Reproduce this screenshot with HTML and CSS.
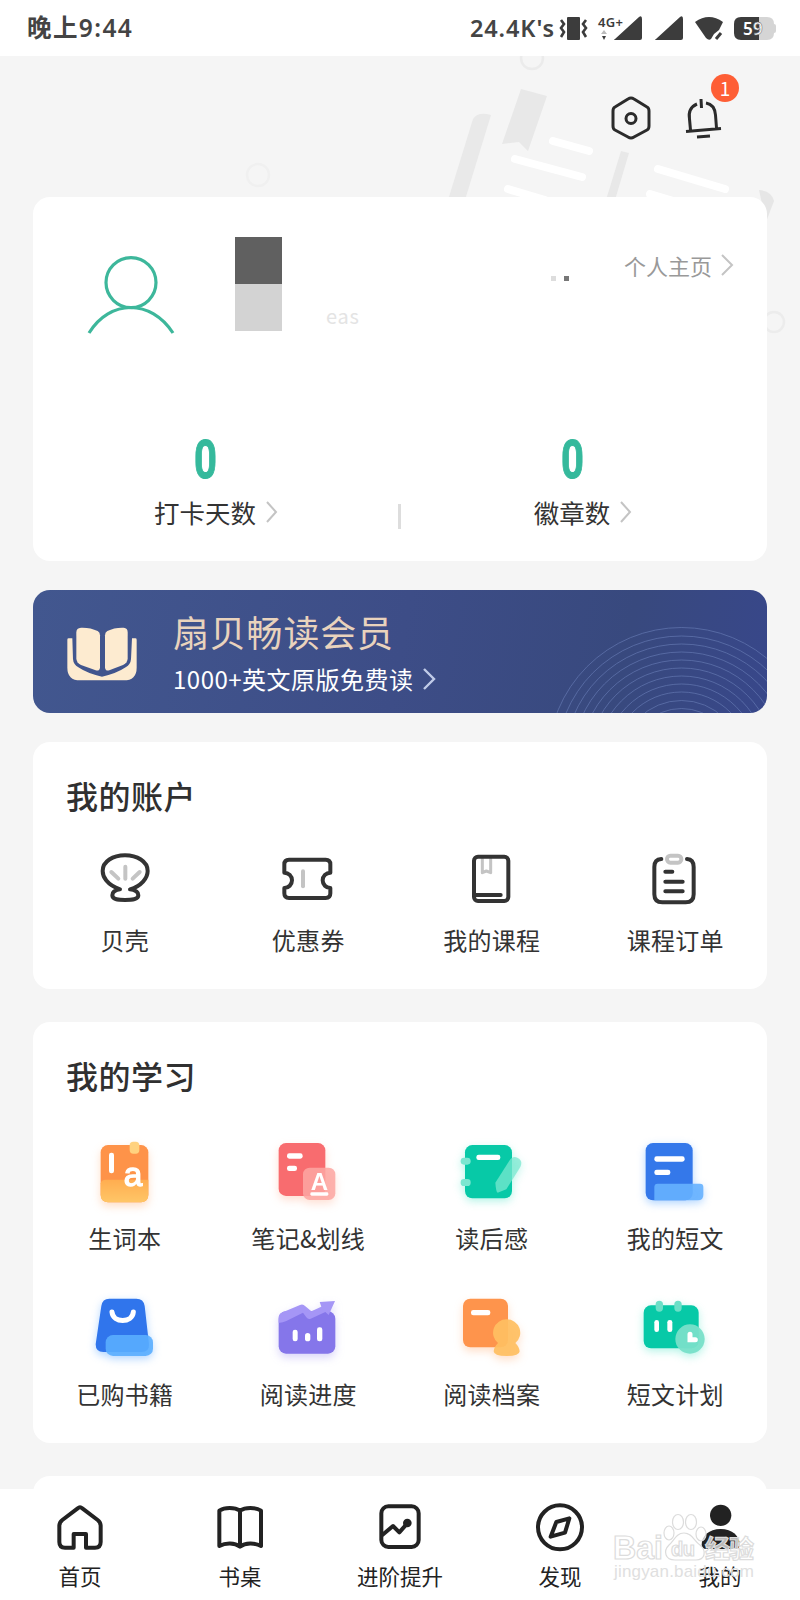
FILE: index.html
```html
<!DOCTYPE html>
<html lang="zh-CN">
<head>
  <meta charset="UTF-8" />
  <meta name="viewport" content="width=device-width, initial-scale=1.0"/>
  <title>我的</title>
  <link rel="stylesheet" href="styles.css">
</head>
<body>
  <div class="page">
    <svg class="bg-art" viewBox="0 0 800 340">
      <circle cx="532" cy="58" r="11" fill="none" stroke="#ebebeb" stroke-width="2.500"/>
      <circle cx="258" cy="175" r="11" fill="none" stroke="#f0f0f0" stroke-width="2.500"/>
      <circle cx="774" cy="322" r="10" fill="none" stroke="#ececec" stroke-width="2.500"/>
      <path d="M521 89 547 96 528 151 519 142 502 144Z" fill="#e8e8e8"/>
      <path d="M473 119Q478 111 491 115L465 200H448Z" fill="#e9e9e9"/>
      <path d="M621 151 629 153 615 200H606Z" fill="#e8e8e8"/>
      <path d="M759 190Q772 191 774 201L766 222Z" fill="#e6e6e6"/>
      <g stroke="#fff" stroke-width="8" stroke-linecap="round">
        <path d="M553 141 589 151M515 159 582 177M658 169 725 189M508 189 545 200M650 194 680 203"/>
      </g>
    </svg>

    <div class="status-bar">
      <span class="time">晚上9:44</span>
      <div class="status-right">
        <span class="speed">24.4K's</span>
        <svg width="230" height="30" viewBox="0 0 230 30">
          <g fill="#3c3c3c">
            <rect x="12" y="4" width="13" height="23" rx="1"/>
            <path d="M6 7 9 11 6 15 9 19 6 24M31 7 28 11 31 15 28 19 31 24" fill="none" stroke="#3c3c3c" stroke-width="2.600"/>
            <path d="M60 26 84 4Q87 2 87 6V25Q87 27 85 27H60Q58 27 60 26ZM101 26 125 4Q128 2 128 6V25Q128 27 126 27H101Q99 27 101 26Z"/>
            <path d="M140 9Q154-1 168 9L164 17 159 21 156 26Q154 28 151 25Z"/>
            <path d="M161 26 166 20" stroke="#3c3c3c" stroke-width="3"/>
            <path d="M47 23H51L49 27Z"/>
            <path d="M46 21H52L49 17Z" fill="#bbb"/>
          </g>
          <text x="43" y="14" class="net" textLength="25">4G+</text>
          <path d="M203 4H212Q219 4 219 11V20Q219 27 212 27H203Z" fill="#d5d5d5"/>
          <rect x="217" y="11" width="4" height="9" rx="2" fill="#d5d5d5"/>
          <path d="M204 4H186Q179 4 179 11V20Q179 27 186 27H204Z" fill="#3c3c3c"/>
          <text x="188" y="22" class="battery">5</text>
          <text x="198" y="22" class="battery battery-edge">9</text>
        </svg>
      </div>
    </div>

    <div class="top-actions">
      <svg width="42" height="46" viewBox="0 0 42 46" fill="none" stroke="#2b2b2b" stroke-width="3">
        <path d="M18 4Q21 2 24 4L37 12Q39 13 39 16V31Q39 34 37 35L24 42Q21 44 18 42L5 35Q3 34 3 31V16Q3 13 5 12Z"/>
        <circle cx="21" cy="23.500" r="5"/>
      </svg>
      <div class="bell">
        <svg width="40" height="46" viewBox="0 0 40 46" fill="none" stroke="#2b2b2b" stroke-width="3">
          <path d="M13 9C6 12 4.500 18 5.500 24L6.500 35M22 8C28 9 31 14 31.500 20L32.500 33M2 36.500 37 33.500M17 4 17.500 13M13 42 26 41"/>
        </svg>
        <span class="badge">1</span>
      </div>
    </div>

    <section class="card profile">
      <div class="profile-row">
        <svg class="avatar" width="88" height="80" viewBox="0 0 88 80" fill="none" stroke="#3db79b" stroke-width="3.200">
          <circle cx="44" cy="26.600" r="25"/>
          <path d="M2 77C23 43 64 43 86 77"/>
        </svg>
        <div class="mosaic"><i></i><i></i></div>
        <span class="nick">eas</span>
        <div class="dots"><i></i><i></i></div>
        <a class="home-link">个人主页
          <svg width="14" height="24" viewBox="0 0 14 24"><path d="M2 2 12 12 2 22"/></svg>
        </a>
      </div>
      <div class="stats">
        <div class="stat">
          <b>0</b>
          <span>打卡天数<svg width="14" height="24" viewBox="0 0 14 24"><path d="M2 2 11 12 2 22"/></svg></span>
        </div>
        <div class="divider"></div>
        <div class="stat">
          <b>0</b>
          <span>徽章数<svg width="14" height="24" viewBox="0 0 14 24"><path d="M2 2 11 12 2 22"/></svg></span>
        </div>
      </div>
    </section>

    <section class="vip">
      <svg class="rings" viewBox="0 0 734 123" fill="none" stroke="#6478b0" stroke-opacity=".7">
        <circle cx="648.500" cy="171" r="133.500"/><circle cx="648.500" cy="171" r="125"/>
        <circle cx="648.500" cy="171" r="117"/><circle cx="648.500" cy="171" r="109"/>
        <circle cx="648.500" cy="171" r="101"/><circle cx="648.500" cy="171" r="93"/>
        <circle cx="648.500" cy="171" r="85"/><circle cx="648.500" cy="171" r="77"/>
        <circle cx="648.500" cy="171" r="69"/><circle cx="648.500" cy="171" r="60.500"/>
        <circle cx="648.500" cy="171" r="52.500"/>
      </svg>
      <svg class="vip-icon" width="70" height="54" viewBox="0 0 210 162" fill="#fdebd0">
        <path d="M1 38Q1 34 5 34H16L18 96Q19 112 34 121Q62 140 105 149Q148 140 176 121Q191 112 192 96L195 34H205Q209 34 209 38V122Q209 160 170 160H40Q1 160 1 122Z"/>
        <path d="M42 2Q70 1 92 12Q99 16 99 25V122Q97 133 86 130L42 114Q28 108 28 94V16Q28 3 42 2Z"/>
        <path d="M170 2Q142 1 121 12Q114 16 114 25V122Q116 133 127 130L168 114Q182 108 182 94V16Q182 3 170 2Z"/>
      </svg>
      <div class="vip-text">
        <h2>扇贝畅读会员</h2>
        <p>1000+英文原版免费读<svg width="14" height="24" viewBox="0 0 14 24"><path d="M2 2 12 12 2 22"/></svg></p>
      </div>
    </section>

    <section class="card account">
      <h3>我的账户</h3>
      <div class="grid line-icons">
        <div class="item">
          <svg viewBox="0 0 162 162">
            <path d="M66 112C26 98 14 74 14 57C14 28 45 10 81 10S149 28 149 57C149 78 130 102 96 112C112 114 121 120 121 130C121 142 105 144 81 144S43 142 43 130C43 120 52 114 66 112Z"/>
            <path class="soft" d="M82 44V80M40 60 61 80M125 60 104 80"/>
          </svg>
          <span>贝壳</span>
        </div>
        <div class="item">
          <svg viewBox="0 0 162 162">
            <path d="M10 62V37Q10 23 24 23H134Q148 23 148 37V62A23 23 0 0 0 148 108V124Q148 138 134 138H24Q10 138 10 124V108A23 23 0 0 0 10 62Z"/>
            <path class="soft" d="M66 58V103"/>
          </svg>
          <span>优惠券</span>
        </div>
        <div class="item">
          <svg viewBox="0 0 162 162">
            <path class="soft thin" d="M52 20V62L64 57 77 62V20"/>
            <rect x="27" y="14" width="103" height="133" rx="12"/>
            <path d="M27 129H107"/>
          </svg>
          <span>我的课程</span>
        </div>
        <div class="item">
          <svg viewBox="0 0 162 162">
            <path d="M40 21Q19 22 19 45V127Q19 151 43 151H113Q137 151 137 127V45Q137 22 117 21M52 59H73M52 89H104M52 118H104"/>
            <rect class="soft" x="57" y="11" width="43" height="21" rx="10"/>
          </svg>
          <span>课程订单</span>
        </div>
      </div>
    </section>

    <section class="card study">
      <h3>我的学习</h3>
      <div class="grid color-icons">
        <div class="item orange">
          <svg viewBox="0 0 216 216">
            <defs>
              <linearGradient id="gold" x1="0" y1="0" x2="0" y2="1"><stop offset="0" stop-color="#ffad50"/><stop offset="1" stop-color="#ffc667"/></linearGradient>
            </defs>
            <rect x="35" y="27" width="143" height="172" rx="22" fill="#fe9349"/>
            <path d="M35 142Q37 131 50 131H178V177Q178 199 156 199H57Q35 199 35 177Z" fill="url(#gold)"/>
            <rect x="122" y="17" width="29" height="36" rx="11" fill="#ffd27f"/>
            <rect x="60" y="50" width="15" height="62" rx="7" fill="#fff"/>
            <text x="104" y="150" font-size="100" class="letter-a">a</text>
          </svg>
          <span>生词本</span>
        </div>
        <div class="item red">
          <svg viewBox="0 0 216 216">
            <rect x="20" y="21" width="140" height="159" rx="22" fill="#f86c6f"/>
            <rect x="45" y="52" width="47" height="16" rx="7" fill="#fff"/>
            <rect x="45" y="89" width="30" height="16" rx="7" fill="#fff"/>
            <rect x="93" y="95" width="97" height="97" rx="20" fill="#fda7a2" fill-opacity=".86"/>
            <text x="116" y="161" font-size="72">A</text>
            <rect x="115" y="169" width="54" height="10" rx="4" fill="#fff"/>
          </svg>
          <span>笔记&amp;划线</span>
        </div>
        <div class="item green">
          <svg viewBox="0 0 216 216">
            <rect x="27" y="27" width="141" height="160" rx="22" fill="#07c9a7"/>
            <rect x="61" y="56" width="72" height="16" rx="7" fill="#fff"/>
            <rect x="14" y="65" width="30" height="21" rx="10" fill="#7be6d0"/>
            <rect x="14" y="129" width="30" height="21" rx="10" fill="#7be6d0"/>
            <path d="M118 140 160 74Q170 59 184 65Q202 73 193 93L151 160 125 170Q120 168 118 140Z" fill="#79e8d0" fill-opacity=".75"/>
          </svg>
          <span>读后感</span>
        </div>
        <div class="item blue">
          <svg viewBox="0 0 216 216">
            <rect x="20" y="21" width="141" height="172" rx="22" fill="#3478ea"/>
            <rect x="46" y="61" width="91" height="16" rx="7" fill="#fff"/>
            <rect x="46" y="101" width="48" height="16" rx="7" fill="#fff"/>
            <path d="M46 193V153Q46 143 56 143H183Q193 143 193 153V177Q193 193 177 193Z" fill="#66b1ff" fill-opacity=".9"/>
          </svg>
          <span>我的短文</span>
        </div>
        <div class="item blue">
          <svg viewBox="0 0 216 216">
            <path d="M61 20H142Q164 20 167 42L180 157Q181 180 158 180H43Q20 180 20 157L37 42Q40 20 61 20Z" fill="#3075ec"/>
            <path d="M69 60C72 94 130 94 133 60" fill="none" stroke="#fff" stroke-width="15" stroke-linecap="round"/>
            <rect x="50" y="129" width="142" height="63" rx="22" fill="#5aaeff" fill-opacity=".9"/>
          </svg>
          <span>已购书籍</span>
        </div>
        <div class="item purple">
          <svg viewBox="0 0 216 216">
            <rect x="20" y="58" width="170" height="127" rx="22" fill="#8576ea"/>
            <path d="M20 74Q22 63 34 60L84 39Q93 35 100 43L118 58 148 44 143 30 189 27 170 69 160 60 116 80Q108 83 103 76L93 62 43 87Q28 94 20 92Z" fill="#a596f6"/>
            <rect x="62" y="113" width="15" height="35" rx="7" fill="#fff"/>
            <rect x="99" y="123" width="16" height="25" rx="8" fill="#fff"/>
            <rect x="135" y="106" width="16" height="42" rx="7" fill="#fff"/>
          </svg>
          <span>阅读进度</span>
        </div>
        <div class="item orange">
          <svg viewBox="0 0 216 216">
            <rect x="21" y="20" width="135" height="146" rx="22" fill="#fe944c"/>
            <rect x="45" y="54" width="58" height="16" rx="7" fill="#fff"/>
            <path d="M152 82A40 40 0 0 1 178 153Q190 165 191 178Q191 192 152 192T113 178Q114 165 126 153A40 40 0 0 1 152 82Z" fill="#ffc062" fill-opacity=".93"/>
          </svg>
          <span>阅读档案</span>
        </div>
        <div class="item green">
          <svg viewBox="0 0 216 216">
            <rect x="14" y="40" width="165" height="129" rx="22" fill="#07c9a7"/>
            <rect x="50" y="26" width="22" height="33" rx="11" fill="#6cdfc7"/>
            <rect x="106" y="26" width="22" height="33" rx="11" fill="#6cdfc7"/>
            <rect x="46" y="84" width="14" height="36" rx="7" fill="#fff"/>
            <rect x="85" y="84" width="15" height="36" rx="7" fill="#fff"/>
            <circle cx="153" cy="141" r="44" fill="#78e0c9" fill-opacity=".95"/>
            <path d="M153 127V143H169" fill="none" stroke="#fff" stroke-width="15" stroke-linecap="round"/>
          </svg>
          <span>短文计划</span>
        </div>
      </div>
    </section>

    <section class="card next"></section>

    <nav class="tabbar">
      <div class="tab">
        <svg viewBox="0 0 162 162"><path d="M74 25Q81 18 88 25L134 60Q143 67 143 78V126Q143 143 126 143H99V102H62V143H36Q19 143 19 126V78Q19 67 28 60Z"/></svg>
        <span>首页</span>
      </div>
      <div class="tab">
        <svg viewBox="0 0 162 162"><path d="M81 32C65 21 35 21 19 32V138C38 128 65 128 81 140C97 128 125 128 144 138V32C127 21 97 21 81 32ZM81 32V138"/></svg>
        <span>书桌</span>
      </div>
      <div class="tab">
        <svg viewBox="0 0 162 162">
          <rect x="25" y="19" width="112" height="122" rx="21"/>
          <path d="M27 106 60 78 79 97 102 71"/>
          <circle class="fill" cx="103" cy="69" r="13"/>
        </svg>
        <span>进阶提升</span>
      </div>
      <div class="tab">
        <svg viewBox="0 0 162 162"><circle cx="81" cy="82" r="66"/><path d="M109 55 70 66 53 110 96 98Z"/></svg>
        <span>发现</span>
      </div>
      <div class="tab">
        <svg viewBox="0 0 162 162"><g class="fill"><circle cx="83" cy="46" r="32"/><path d="M83 87C118 87 140 108 140 134Q140 147 126 147H40Q26 147 26 134C26 108 48 87 83 87Z"/></g></svg>
        <span>我的</span>
      </div>
    </nav>

    <svg class="watermark" width="150" height="74" viewBox="0 0 150 74">
      <g fill="#fff" fill-opacity=".7" stroke="#dcdcdc" stroke-width="1.200">
        <ellipse cx="58" cy="26" rx="5" ry="7"/>
        <ellipse cx="67" cy="15" rx="5.500" ry="7.500"/>
        <ellipse cx="80" cy="15" rx="5.500" ry="7.500"/>
        <ellipse cx="90" cy="27" rx="5" ry="7"/>
        <path d="M73 26C81 26 83 34 89 38C96 44 94 53 85 53H64C54 53 52 44 58 38C63 34 65 26 73 26Z"/>
        <text x="2" y="52" font-size="33" textLength="50" lengthAdjust="spacingAndGlyphs">Bai</text>
        <text x="60" y="49" font-size="20" textLength="24">du</text>
        <text x="94" y="51" font-size="25" textLength="49">经验</text>
      </g>
      <text x="3" y="70" font-size="17" textLength="140" class="wm-url">jingyan.baidu.com</text>
    </svg>
  </div>
</body>
</html>
```
FILE: styles.css
```css
* {
  box-sizing: border-box;
}

body {
  margin: 0;
  font-family: "Noto Sans CJK SC", "Noto Sans", sans-serif;
  color: #333;
}

h2, h3, p {
  margin: 0;
}

.page {
  position: relative;
  width: 800px;
  height: 1600px;
  overflow: hidden;
  background: #f5f5f5;
}

.bg-art {
  position: absolute;
  top: 0;
  left: 0;
  width: 800px;
  height: 340px;
}

.status-bar {
  position: relative;
  display: flex;
  justify-content: space-between;
  align-items: center;
  height: 56px;
  padding: 0 15px 0 27px;
  background: #fff;
  color: #444;
}

.time {
  font-family: "Noto Sans", "Noto Sans CJK SC", sans-serif;
  font-size: 24.5px;
  font-weight: 600;
  line-height: 32px;
  letter-spacing: 1.4px;
}

.status-right {
  display: flex;
  align-items: center;
}

.speed {
  font-family: "Noto Sans", sans-serif;
  font-size: 23.5px;
  font-weight: 600;
  line-height: 32px;
  letter-spacing: 0.9px;
}

.net {
  font: 600 13px "Noto Sans", sans-serif;
  fill: #3c3c3c;
}

.battery {
  font: 600 17px "Noto Sans", sans-serif;
  fill: #fff;
}

.battery-edge {
  stroke: #777;
  stroke-width: 0.6px;
}

.top-actions {
  position: relative;
  display: flex;
  justify-content: flex-end;
  gap: 32px;
  height: 141px;
  padding: 39px 76px 0 0;
}

.bell {
  position: relative;
  height: 46px;
}

.badge {
  position: absolute;
  top: -21px;
  right: -15px;
  width: 28px;
  height: 28px;
  border-radius: 50%;
  background: #fe5e35;
  color: #fff;
  font-size: 19px;
  line-height: 28px;
  text-align: center;
}

.card {
  position: relative;
  width: 734px;
  margin: 0 33px;
  border-radius: 17px;
  background: #fff;
}

.profile {
  height: 364px;
  padding-top: 40px;
}

.profile-row {
  display: flex;
  align-items: flex-start;
  height: 190px;
  padding: 0 33px 0 54px;
}

.avatar {
  margin-top: 19px;
}

.mosaic {
  margin-left: 60px;
}

.mosaic i {
  display: block;
  width: 47px;
  height: 47px;
  background: #606060;
}

.mosaic i + i {
  background: #d3d3d3;
}

.nick {
  margin: 64px 0 0 44px;
  font-size: 20px;
  line-height: 30px;
  letter-spacing: 0.8px;
  color: #e4e4e4;
}

.dots {
  display: flex;
  gap: 8px;
  margin: 39px 0 0 auto;
  padding-right: 55px;
}

.dots i {
  width: 5px;
  height: 5px;
  background: #ddd;
}

.dots i + i {
  background: #777;
}

.home-link {
  display: flex;
  align-items: center;
  gap: 8px;
  margin-top: 12px;
  font-size: 22px;
  line-height: 32px;
  color: #999;
}

.home-link svg,
.stat svg,
.vip-text p svg {
  fill: none;
  stroke: #c4c4c4;
  stroke-width: 2;
}

.stats {
  display: flex;
}

.stat {
  flex: 1;
  display: flex;
  flex-direction: column;
  align-items: center;
}

.stat b {
  height: 66px;
  margin-right: 22px;
  font-family: Roboto, sans-serif;
  font-size: 54px;
  font-weight: 700;
  line-height: 65px;
  color: #35b99c;
  -webkit-text-stroke: 1px #35b99c;
  transform: scaleX(0.74);
}

.stat span {
  display: flex;
  align-items: center;
  gap: 9px;
  font-size: 25.500px;
  line-height: 38px;
}

.divider {
  width: 3px;
  height: 25px;
  margin: 77px -1px 0 -2px;
  background: #ddd;
}

.vip {
  position: relative;
  display: flex;
  width: 734px;
  height: 123px;
  margin: 29px 33px;
  padding: 37px 0 0 34px;
  border-radius: 17px;
  overflow: hidden;
  background: linear-gradient(100deg, #42578f, #3d4d87 50%, #38497e 80%, #38478a);
}

.rings {
  position: absolute;
  top: 0;
  left: 0;
  width: 734px;
  height: 123px;
}

.vip-text {
  margin: -21px 0 0 36px;
}

.vip-text h2 {
  font-size: 36px;
  font-weight: 400;
  line-height: 50px;
  letter-spacing: 0.8px;
  color: #e9d3bd;
}

.vip-text p {
  display: flex;
  align-items: center;
  gap: 8px;
  margin-top: 3px;
  font-size: 24px;
  line-height: 40px;
  letter-spacing: 0.5px;
  color: #fff;
}

.vip-text p svg {
  stroke: #c0cbe8;
  stroke-width: 2.4;
}

.card h3 {
  padding-left: 33px;
  font-size: 32px;
  font-weight: 500;
  line-height: 48px;
  letter-spacing: 0.5px;
  color: #303030;
}

.account {
  height: 247px;
  padding-top: 29px;
}

.grid {
  display: grid;
  grid-template-columns: repeat(4, 1fr);
}

.item {
  display: flex;
  flex-direction: column;
  align-items: center;
}

.item span {
  font-size: 24px;
  line-height: 36px;
  letter-spacing: 0.3px;
}

.line-icons {
  padding-top: 33px;
}

.line-icons svg {
  width: 54px;
  height: 54px;
  margin-bottom: 16px;
  fill: none;
  stroke: #333;
  stroke-width: 12;
  stroke-linecap: round;
  stroke-linejoin: round;
}

.line-icons .soft {
  stroke: #c4c4c4;
}

.line-icons .thin {
  stroke-width: 9;
}

.study {
  height: 421px;
  margin-top: 33px;
  padding-top: 29px;
}

.color-icons {
  padding-top: 37px;
  row-gap: 36px;
}

.color-icons svg {
  width: 72px;
  height: 72px;
  margin-bottom: 12px;
  overflow: visible;
}

.color-icons text {
  font-family: "Liberation Sans", sans-serif;
  font-weight: 700;
  fill: #fff;
}

.color-icons .letter-a {
  font-weight: 400;
  stroke: #fff;
  stroke-width: 4px;
}

.orange svg { filter: drop-shadow(0 4px 4px rgba(255, 148, 76, 0.3)); }
.red svg { filter: drop-shadow(0 4px 4px rgba(255, 150, 110, 0.3)); }
.green svg { filter: drop-shadow(0 3px 4px rgba(7, 220, 175, 0.3)); }
.blue svg { filter: drop-shadow(0 3px 4px rgba(60, 150, 255, 0.4)); }
.purple svg { filter: drop-shadow(0 4px 4px rgba(133, 118, 234, 0.3)); }

.next {
  height: 160px;
  margin-top: 33px;
}

.tabbar {
  position: absolute;
  left: 0;
  bottom: 0;
  display: flex;
  width: 100%;
  height: 111px;
  padding-top: 11px;
  background: #fff;
}

.tab {
  flex: 1;
  display: flex;
  flex-direction: column;
  align-items: center;
  font-size: 21.500px;
  line-height: 32px;
  color: #222;
}

.tab svg {
  width: 54px;
  height: 54px;
  margin-bottom: 6px;
  fill: none;
  stroke: #222;
  stroke-width: 12;
  stroke-linejoin: round;
}

.tab .fill {
  fill: #222;
  stroke: none;
}

.watermark {
  position: absolute;
  left: 611px;
  top: 1507px;
  font-family: "Liberation Sans", "Noto Sans CJK SC", sans-serif;
  font-weight: 700;
}

.wm-url {
  font-weight: 400;
  fill: #e0e0e0;
}
```
